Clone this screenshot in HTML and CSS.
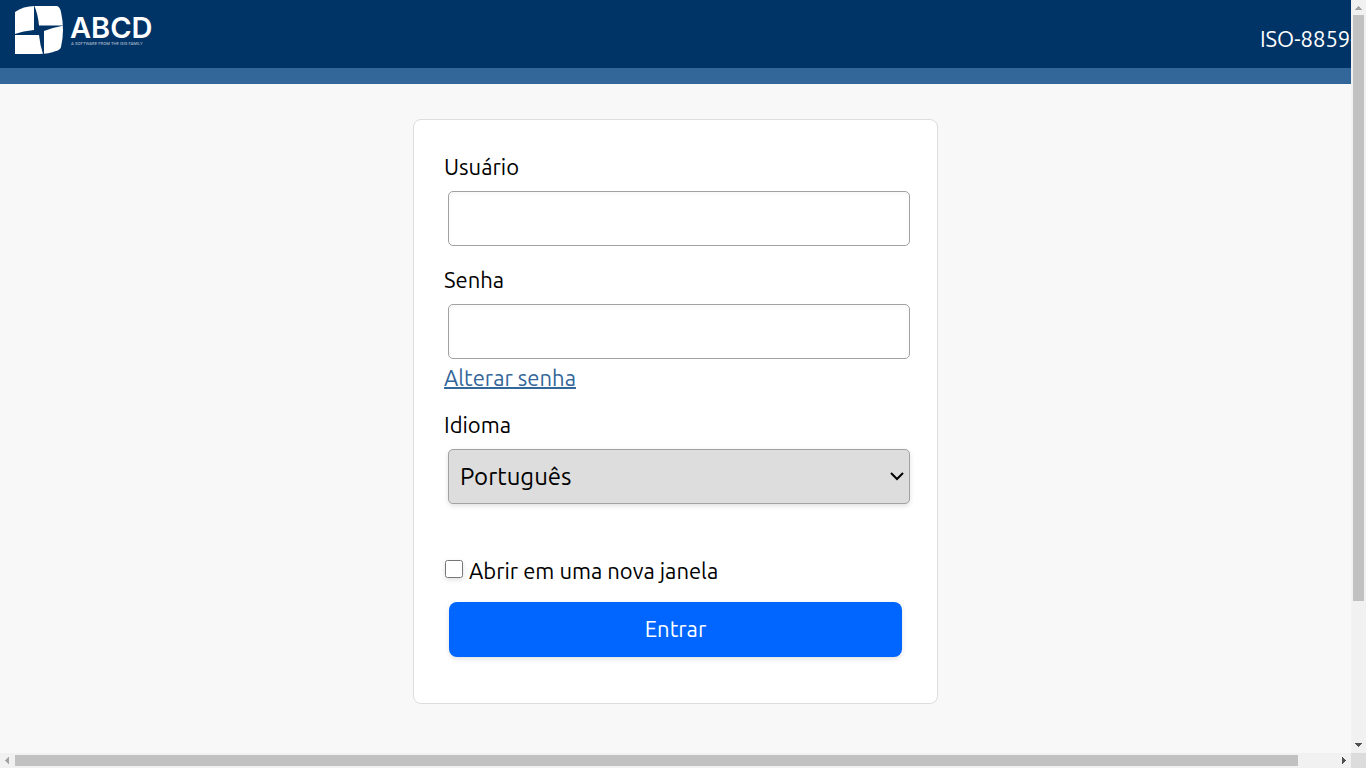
FILE: index.html
```html
<!DOCTYPE html>
<html lang="pt">
<head>
<meta charset="utf-8">
<title>ABCD</title>
<link rel="stylesheet" href="styles.css">
</head>
<body>
<div class="frame">
  <div class="viewport">
    <header class="heading">
      <svg class="logo" width="140" height="50" viewBox="0 0 140 50" role="img" aria-label="ABCD">
        <path fill="#fff" d="M0 7Q8 1 20 1H42Q45 2 46 7Q50 25 46 42Q45 45 41 46Q34 49 24 49H0Z"/>
        <path fill="#003366" d="M19 0Q23 9 24 20.500H49Q40 22 29 26V49H28Q25 40 24 30H0V29Q8 26 19 25Z"/>
        <text class="logo-name" x="55" y="33" fill="#fff">ABCD</text>
        <text class="logo-tag" x="56" y="40" fill="#a9b9ca">A SOFTWARE FROM THE ISIS FAMILY</text>
      </svg>
      <span class="charset">ISO-8859-1</span>
    </header>
    <div class="section-bar"></div>
    <main class="content">
      <form class="login">
        <div class="field">
          <label for="user">Usuário</label>
          <input class="control" id="user" type="text">
        </div>
        <div class="field">
          <label for="password">Senha</label>
          <input class="control" id="password" type="password">
          <a class="change" href="#">Alterar senha</a>
        </div>
        <div class="field">
          <label for="language">Idioma</label>
          <div class="select-wrap">
            <select class="control language" id="language"><option>Português</option></select>
            <svg class="chevron" width="14" height="9" viewBox="0 0 14 9"><path d="M1 1L7 7L13 1" fill="none" stroke="#000" stroke-width="2"/></svg>
          </div>
        </div>
        <label class="check"><input type="checkbox">Abrir em uma nova janela</label>
        <button class="submit" type="button">Entrar</button>
      </form>
    </main>
  </div>
  <div class="scroll vertical">
    <svg width="15" height="15" viewBox="0 0 15 15" shape-rendering="crispEdges"><path fill="#a3a3a3" d="M4 10L7.500 6L11 10Z"/></svg>
    <div class="track"><div class="thumb"></div></div>
    <svg width="15" height="15" viewBox="0 0 15 15" shape-rendering="crispEdges"><path fill="#505050" d="M4 5L7.500 9L11 5Z"/></svg>
  </div>
  <div class="scroll horizontal">
    <svg width="15" height="15" viewBox="0 0 15 15" shape-rendering="crispEdges"><path fill="#a3a3a3" d="M9 4L5 7.500L9 11Z"/></svg>
    <div class="track"><div class="thumb"></div></div>
    <svg width="15" height="15" viewBox="0 0 15 15" shape-rendering="crispEdges"><path fill="#505050" d="M6 4L10 7.500L6 11Z"/></svg>
  </div>
  <div class="corner"></div>
</div>
</body>
</html>
```
FILE: styles.css
```css
* { box-sizing: border-box; }
body {
  margin: 0;
  font: 22px/28px Ubuntu, "Noto Sans", sans-serif;
  color: #000;
}
.frame {
  display: grid;
  grid-template: minmax(0, 1fr) 15px / minmax(0, 1fr) 15px;
  height: 100vh;
}
.viewport { overflow: hidden; background: #f8f8f8; }
.heading {
  display: flex;
  justify-content: space-between;
  height: 68px;
  padding: 5px 0 0 15px;
  overflow: hidden;
  background: #003366;
  color: #fff;
}
.logo { flex: none; }
.logo-name { font: 600 29px Inter, sans-serif; }
.logo-tag { font: 500 4px Inter, sans-serif; }
.charset {
  flex: none;
  margin: 20px -18px 0 0;
  white-space: nowrap;
}
.section-bar { height: 16px; background: #336699; }
.content { padding: 35px 16px; }
.login {
  max-width: 525px;
  margin: 0 auto;
  padding: 30px 30px 46px;
  border: 1px solid #ddd;
  border-radius: 8px;
  background: #fff;
}
.field { display: flex; flex-direction: column; margin-bottom: 17px; }
.field label { padding: 3px 0 10px; }
.control {
  height: 55px;
  margin: 0 -3px 0 4px;
  padding: 0 12px;
  border: 1px solid #a2a2a2;
  border-radius: 5px;
  background: #fff;
  box-shadow: inset 0 2px 5px rgba(0, 0, 0, 0.03);
  color: #000;
  font: inherit;
}
.select-wrap { display: flex; position: relative; }
.language {
  flex: 1;
  appearance: none;
  padding: 0 30px 0 11px;
  background: #ddd;
  box-shadow: 0 2px 5px rgba(0, 0, 0, 0.12);
  font-size: 24px;
}
.chevron {
  position: absolute;
  top: 23px;
  right: 3px;
  pointer-events: none;
}
.change {
  align-self: flex-start;
  margin: 5px 0 -1px;
  color: #336699;
  text-decoration-thickness: 2px;
}
.check {
  display: flex;
  align-items: center;
  gap: 6px;
  margin: 53px 0 17px;
}
.check input {
  width: 18px;
  height: 18px;
  margin: 0 0 4px 1px;
  box-shadow: 0 2px 5px rgba(0, 0, 0, 0.12);
}
.submit {
  display: block;
  width: calc(100% - 10px);
  height: 55px;
  margin: 0 5px;
  padding: 0 0 2px;
  border: 0;
  border-radius: 8px;
  background: #0066ff;
  box-shadow: 0 2px 5px rgba(0, 0, 0, 0.12);
  color: #fff;
  font: inherit;
}
.scroll { display: flex; background: #f1f1f1; }
.scroll svg { flex: none; }
.vertical { flex-direction: column; }
.track { display: flex; flex: 1; }
.vertical .track { flex-direction: column; padding: 0 2px; }
.horizontal .track { padding: 2px 0; }
.thumb { background: #c1c1c1; }
.vertical .thumb { height: 81%; }
.horizontal .thumb { width: 97.1%; }
.corner { background: #dcdcdc; }
```
